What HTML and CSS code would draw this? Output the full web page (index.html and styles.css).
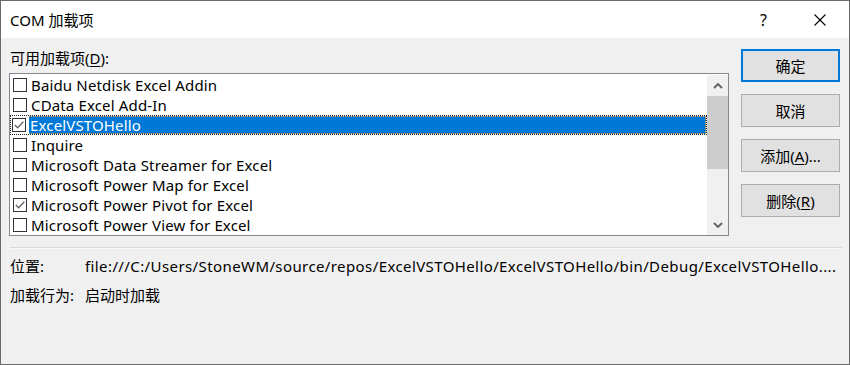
FILE: index.html
```html
<!doctype html>
<html lang="zh-CN">
  <head>
    <meta charset="UTF-8" />
    <meta name="viewport" content="width=device-width, initial-scale=1.0" />
    <title>COM 加载项</title>
    <link rel="stylesheet" href="styles.css">
  </head>
  <body>
    <div class="dialog">
      <div class="titlebar">
        <span class="title">COM 加载项</span>
        <div class="title-buttons">
          <span class="help">?</span>
          <svg class="close" width="12" height="12" viewBox="0 0 12 12">
            <path d="M0.5 0.5 L11.5 11.5 M11.5 0.5 L0.5 11.5" stroke="#000" stroke-width="1.1" fill="none" />
          </svg>
        </div>
      </div>

      <div class="body">
        <div class="main">
          <div class="list-panel">
            <div class="list-label">可用加载项(<u>D</u>):</div>
            <div class="listbox">
              <ul class="items">
                <li class="item"><span class="checkbox"></span><span class="name">Baidu Netdisk Excel Addin</span></li>
                <li class="item"><span class="checkbox"></span><span class="name">CData Excel Add-In</span></li>
                <li class="item selected">
                  <span class="checkbox checked">
                    <svg width="12" height="12" viewBox="0 0 12 12"><path d="M1.8 6 L4.6 8.8 L10.4 2.8" stroke="#666" stroke-width="1.3" fill="none" /></svg>
                  </span>
                  <span class="name">ExcelVSTOHello</span>
                </li>
                <li class="item"><span class="checkbox"></span><span class="name">Inquire</span></li>
                <li class="item"><span class="checkbox"></span><span class="name">Microsoft Data Streamer for Excel</span></li>
                <li class="item"><span class="checkbox"></span><span class="name">Microsoft Power Map for Excel</span></li>
                <li class="item">
                  <span class="checkbox checked">
                    <svg width="12" height="12" viewBox="0 0 12 12"><path d="M1.8 6 L4.6 8.8 L10.4 2.8" stroke="#666" stroke-width="1.3" fill="none" /></svg>
                  </span>
                  <span class="name">Microsoft Power Pivot for Excel</span>
                </li>
                <li class="item"><span class="checkbox"></span><span class="name">Microsoft Power View for Excel</span></li>
              </ul>
              <div class="scrollbar">
                <svg class="arrow" width="10" height="6" viewBox="0 0 10 6"><path d="M1 5 L5 1 L9 5" stroke="#606060" stroke-width="1.8" fill="none" /></svg>
                <div class="track"><div class="thumb"></div></div>
                <svg class="arrow" width="10" height="6" viewBox="0 0 10 6"><path d="M1 1 L5 5 L9 1" stroke="#606060" stroke-width="1.8" fill="none" /></svg>
              </div>
            </div>
          </div>

          <div class="actions">
            <button class="btn btn-default">确定</button>
            <button class="btn">取消</button>
            <button class="btn">添加(<u>A</u>)...</button>
            <button class="btn">删除(<u>R</u>)</button>
          </div>
        </div>

        <div class="separator"></div>

        <div class="details">
          <div class="detail-row">
            <span class="detail-label">位置:</span>
            <span class="detail-value path">file:///C:/Users/StoneWM/source/repos/ExcelVSTOHello/ExcelVSTOHello/bin/Debug/ExcelVSTOHello....</span>
          </div>
          <div class="detail-row">
            <span class="detail-label">加载行为:</span>
            <span class="detail-value">启动时加载</span>
          </div>
        </div>
      </div>
    </div>
  </body>
</html>
```

FILE: styles.css
```css
* {
  margin: 0;
  padding: 0;
  box-sizing: border-box;
}

body {
  font-family: "Noto Sans", "Noto Sans CJK SC", sans-serif;
  font-size: 15px;
  color: #000;
  background: #f0f0f0;
}

.dialog {
  width: 850px;
  height: 365px;
  border: 1px solid #6a6a6a;
  background: #f0f0f0;
  display: flex;
  flex-direction: column;
  overflow: hidden;
}

.titlebar {
  height: 37px;
  background: white;
  display: flex;
  align-items: center;
  justify-content: space-between;
  padding: 0 23px 0 9px;
}

.title {
  font-size: 15px;
  line-height: 20px;
}

.title-buttons {
  display: flex;
  align-items: center;
  gap: 47px;
}

.help {
  font-size: 16px;
  line-height: 20px;
}

.body {
  padding: 10px 8px 0 8px;
}

.main {
  display: flex;
  gap: 12px;
}

.list-label {
  line-height: 20px;
  height: 20px;
  margin-bottom: 5px;
  padding-left: 1px;
}

.list-label u,
.btn u {
  text-decoration-thickness: 1px;
  text-underline-offset: 2px;
}

.listbox {
  width: 720px;
  height: 163px;
  border: 1px solid #828790;
  background: white;
  display: flex;
  padding: 1px 0 0 0;
}

.items {
  list-style: none;
  width: 697px;
}

.item {
  height: 20px;
  display: flex;
  align-items: center;
  padding-left: 2px;
  white-space: nowrap;
  border: 1px solid transparent;
  letter-spacing: 0.15px;
}

.checkbox {
  width: 14px;
  height: 14px;
  border: 1px solid #333;
  background: white;
  display: flex;
  align-items: center;
  justify-content: center;
  flex-shrink: 0;
}

.name {
  height: 18px;
  line-height: 18px;
  margin-left: 3px;
  padding-left: 1px;
}

.item.selected {
  border: 1px dotted #222;
  padding-left: 1px;
}

.item.selected .name {
  flex: 1;
  line-height: 16px;
  background: #0078d7;
  color: white;
  border: 1px dotted #f39a28;
  border-left: none;
}

.scrollbar {
  width: 21px;
  background: #f0f0f0;
  display: flex;
  flex-direction: column;
  align-items: center;
}

.arrow {
  margin: 8px 0 7px 0;
}

.track {
  flex: 1;
  width: 100%;
}

.thumb {
  height: 73px;
  background: #cdcdcd;
}

.actions {
  display: flex;
  flex-direction: column;
  gap: 12px;
  margin-top: 1px;
}

.btn {
  width: 99px;
  height: 33px;
  background: #e1e1e1;
  border: 1px solid #adadad;
  font-family: "Noto Sans", "Noto Sans CJK SC", sans-serif;
  font-size: 15px;
  color: #000;
}

.btn-default {
  border: 2px solid #0078d7;
}

.separator {
  height: 2px;
  background: #d9d9d9;
  border-bottom: 1px solid #fafafa;
  margin: 11px 0 7px 1px;
  width: 832px;
}

.details {
  display: flex;
  flex-direction: column;
  gap: 9px;
}

.detail-row {
  display: flex;
  line-height: 20px;
  white-space: nowrap;
}

.detail-label {
  width: 76px;
  padding-left: 1px;
}

.path {
  letter-spacing: 0.4px;
}
```
